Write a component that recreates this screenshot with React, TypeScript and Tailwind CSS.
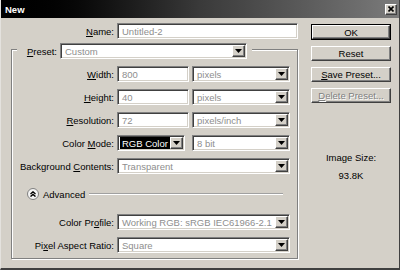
import type { ReactNode } from "react";

const raised =
  "bg-[#d4d0c8] border border-t-white border-l-white border-b-[#404040] border-r-[#404040] shadow-[inset_-1px_-1px_0_#808080]";
const sunken =
  "bg-white border border-t-[#808080] border-l-[#808080] border-b-white border-r-white shadow-[inset_1px_1px_0_#404040,inset_-1px_-1px_0_#d4d0c8]";

function Label({ text, u, className = "w-[105px]" }: { text: string; u: number; className?: string }) {
  return (
    <div className={`${className} shrink-0 text-right pr-[3px] text-black`}>
      {text.slice(0, u)}
      <span className="underline">{text[u]}</span>
      {text.slice(u + 1)}
    </div>
  );
}

function Input({ value, className }: { value: string; className: string }) {
  return (
    <div className={`${className} h-[16px] ${sunken} flex items-center pl-[4px] text-[#8e8e8e]`}>
      {value}
    </div>
  );
}

function Arrow() {
  return (
    <div className={`w-[13px] h-full shrink-0 ${raised} flex items-center justify-center`}>
      <svg width="7" height="4" viewBox="0 0 7 4">
        <polygon points="0,0 7,0 3.5,4" fill="#000" />
      </svg>
    </div>
  );
}

function Select({
  value,
  className,
  active,
}: {
  value: string;
  className: string;
  active?: boolean;
}) {
  return (
    <div className={`${className} h-[16px] ${sunken} flex p-[1px] pl-[2px]`}>
      <div
        className={`flex-1 flex items-center pl-[2px] whitespace-nowrap overflow-hidden ${
          active ? "bg-black text-white" : "text-[#8e8e8e]"
        }`}
      >
        {value}
      </div>
      <Arrow />
    </div>
  );
}

function Row({ children }: { children: ReactNode }) {
  return <div className="flex items-center h-[16px]">{children}</div>;
}

function Button({ children, disabled }: { children: ReactNode; disabled?: boolean }) {
  return (
    <div
      className={`w-[80px] h-[15px] ${raised} flex items-center justify-center ${
        disabled ? "text-[#808080] [text-shadow:1px_1px_0_#fff]" : "text-black"
      }`}
    >
      {children}
    </div>
  );
}

export default function App() {
  return (
    <div className="w-[400px] h-[270px] overflow-hidden bg-[#d4d0c8] border-l border-l-[#e4e2de] border-r border-r-[#404040] border-b-2 border-b-[#404040] flex flex-col text-[9.5px] leading-[11px] [font-family:'Liberation_Sans',Arial,sans-serif]">
      {/* title bar */}
      <div className="h-[18px] shrink-0 flex items-center justify-between pl-[4px] pr-[2px] bg-gradient-to-r from-[#000] via-[#3a3a3a] to-[#7b7b7b]">
        <span className="text-white font-bold text-[9.5px]">New</span>
        <div className={`w-[12px] h-[11px] ${raised} flex items-center justify-center`}>
          <svg width="6" height="6" viewBox="0 0 6 6">
            <path d="M0.5 0.5 L5.5 5.5 M5.5 0.5 L0.5 5.5" stroke="#000" strokeWidth="1.6" />
          </svg>
        </div>
      </div>

      <div className="flex flex-1">
        {/* left column */}
        <div className="w-[299px] shrink-0 pt-[5px]">
          <Row>
            <Label text="Name:" u={0} className="w-[116px]" />
            <Input value="Untitled-2" className="w-[181px]" />
          </Row>

          <div className="ml-[10px] mt-[10px] w-[287px] border border-[#808080] shadow-[inset_1px_1px_0_#fff,1px_1px_0_#fff] pb-[5px]">
            <div className="-mt-[7px] ml-[5px] w-fit bg-[#d4d0c8] pr-[5px] flex items-center h-[16px]">
              <Label text="Preset:" u={0} className="w-[43px]" />
              <Select value="Custom" className="w-[187px]" />
            </div>

            <div className="mt-[7px] flex flex-col gap-[7px]">
              <Row>
                <Label text="Width:" u={0} />
                <Input value="800" className="w-[72px]" />
                <Select value="pixels" className="ml-[3px] w-[98px]" />
              </Row>
              <Row>
                <Label text="Height:" u={0} />
                <Input value="40" className="w-[72px]" />
                <Select value="pixels" className="ml-[3px] w-[98px]" />
              </Row>
              <Row>
                <Label text="Resolution:" u={0} />
                <Input value="72" className="w-[72px]" />
                <Select value="pixels/inch" className="ml-[3px] w-[98px]" />
              </Row>
              <Row>
                <Label text="Color Mode:" u={6} />
                <Select value="RGB Color" className="w-[68px]" active />
                <Select value="8 bit" className="ml-[7px] w-[98px]" />
              </Row>
              <Row>
                <Label text="Background Contents:" u={11} />
                <Select value="Transparent" className="w-[173px]" />
              </Row>
            </div>

            <div className="mt-[14px] h-[12px] flex items-center pl-[15px] pr-[14px]">
              <div className="w-[12px] h-[12px] rounded-full bg-[#f4f4f4] border border-[#808080] flex items-center justify-center">
                <svg width="6" height="6" viewBox="0 0 6 6">
                  <path d="M0.5 3 L3 0.8 L5.5 3 M0.5 5.6 L3 3.4 L5.5 5.6" stroke="#000" strokeWidth="1.3" fill="none" />
                </svg>
              </div>
              <span className="ml-[4px] text-black">Advanced</span>
              <div className="ml-[4px] flex-1 h-[2px] border-t border-t-[#a0a0a0] border-b border-b-white" />
            </div>

            <div className="mt-[14px] flex flex-col gap-[7px]">
              <Row>
                <Label text="Color Profile:" u={8} />
                <Select value="Working RGB:  sRGB IEC61966-2.1" className="w-[173px]" />
              </Row>
              <Row>
                <Label text="Pixel Aspect Ratio:" u={2} />
                <Select value="Square" className="w-[173px]" />
              </Row>
            </div>
          </div>
        </div>

        {/* right column */}
        <div className="ml-[11px] w-[80px] pt-[6px] flex flex-col">
          <div className="flex flex-col gap-[6px]">
            <div className="border border-black">
              <div className={`h-[14px] ${raised} flex items-center justify-center text-black`}>OK</div>
            </div>
            <Button>Reset</Button>
            <Button>
              <span className="underline">S</span>ave Preset...
            </Button>
            <Button disabled>
              <span className="underline">D</span>elete Preset...
            </Button>
          </div>
          <div className="mt-[49px] text-center text-black">Image Size:</div>
          <div className="mt-[7px] text-center text-black">93.8K</div>
        </div>
      </div>
    </div>
  );
}
